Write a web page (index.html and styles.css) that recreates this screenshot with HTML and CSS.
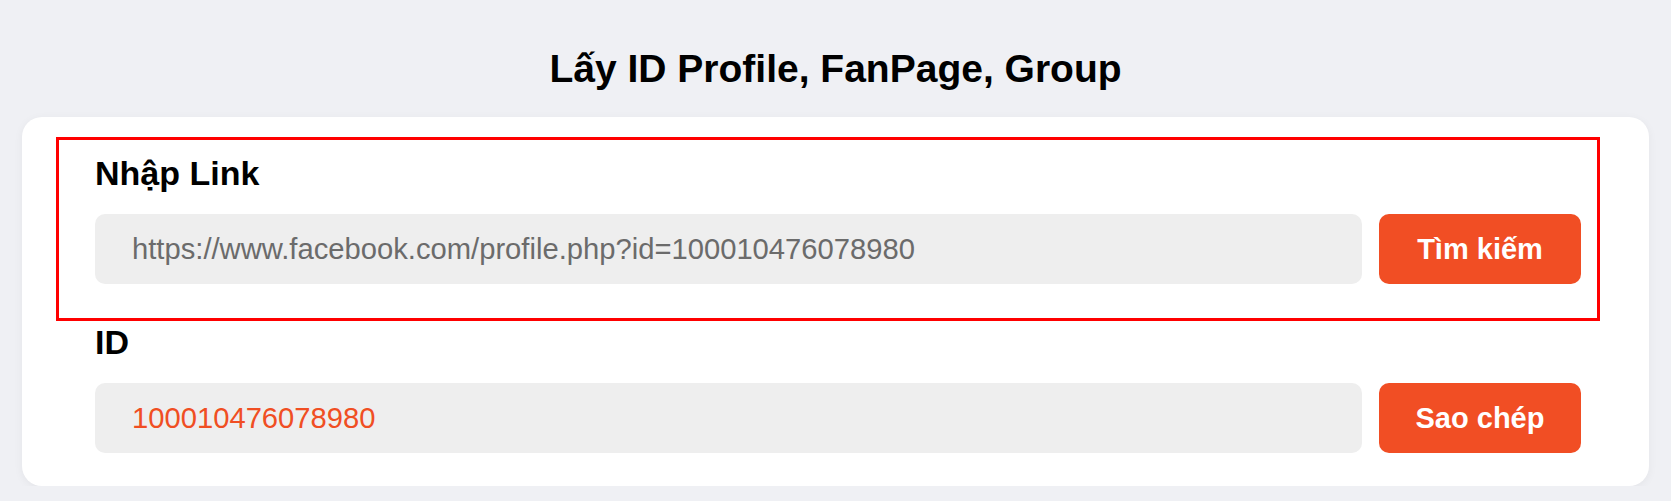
FILE: index.html
```html
<!DOCTYPE html>
<html lang="vi">
<head>
<meta charset="utf-8">
<title>Lấy ID Profile, FanPage, Group</title>
<link rel="stylesheet" href="styles.css">
</head>
<body>
<h1 class="page-title">Lấy ID Profile, FanPage, Group</h1>
<main class="card">
  <section class="field field--highlight">
    <label class="field-label" for="link">Nhập Link</label>
    <div class="field-row">
      <input class="field-input" id="link" type="text" placeholder="https://www.facebook.com/profile.php?id=100010476078980">
      <button class="btn" type="button">Tìm kiếm</button>
    </div>
  </section>
  <section class="field field--result">
    <label class="field-label" for="uid">ID</label>
    <div class="field-row">
      <input class="field-input field-input--result" id="uid" type="text" value="100010476078980" readonly>
      <button class="btn" type="button">Sao chép</button>
    </div>
  </section>
</main>
</body>
</html>
```
FILE: styles.css
```css
* { box-sizing: border-box; }

body {
  margin: 0;
  background: #eff0f4;
  font-family: "Liberation Sans", Arial, sans-serif;
  color: #000;
}

.page-title {
  margin: 47px 0 26px;
  font-size: 39px;
  line-height: 44px;
  font-weight: bold;
  text-align: center;
  color: #000;
}

.card {
  margin: 0 22px;
  padding: 20px 49px 30px 34px;
  background: #fff;
  border-radius: 20px;
  box-shadow: 0 2px 10px rgba(0, 0, 0, 0.05);
}

.field {
  border: 3px solid transparent;
  padding: 0 16px 0 36px;
}

.field--highlight {
  border-color: #ff0000;
  padding-top: 15px;
  padding-bottom: 34px;
}

.field--result {
  padding-top: 0;
  padding-bottom: 0;
}

.field-label {
  display: block;
  font-size: 34px;
  line-height: 37px;
  font-weight: bold;
  margin-bottom: 22px;
}

.field-row {
  display: flex;
  gap: 17px;
}

.field-input {
  flex: 1;
  min-width: 0;
  height: 70px;
  padding: 0 20px 0 37px;
  border: none;
  outline: none;
  border-radius: 10px;
  background: #eeeeee;
  font-family: "Liberation Sans", Arial, sans-serif;
  font-size: 29.2px;
  color: #666;
}

.field-input::placeholder {
  color: #6b6b6b;
  opacity: 1;
}

.field-input--result {
  color: #f04e23;
}

.btn {
  flex: none;
  width: 202px;
  height: 70px;
  border: none;
  border-radius: 10px;
  background: #f14e24;
  color: #fff;
  font-family: "Liberation Sans", Arial, sans-serif;
  font-size: 29px;
  font-weight: bold;
  cursor: pointer;
}
```
